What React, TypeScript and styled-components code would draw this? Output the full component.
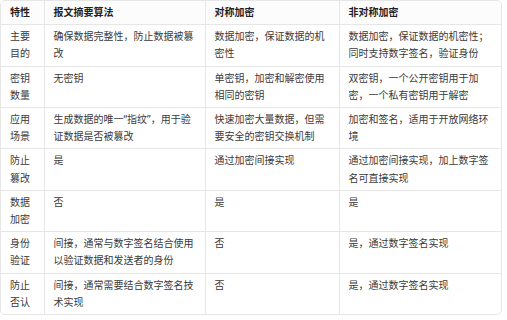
import styled, { createGlobalStyle } from 'styled-components';

const GlobalStyle = createGlobalStyle`
  html, body {
    margin: 0;
    padding: 0;
    background: #ffffff;
  }

  body {
    font-family: "Noto Sans", "Noto Sans CJK SC", sans-serif;
  }
`;

const TableFrame = styled.div`
  width: 502px;
  border: 1px solid #e6e6e6;
  border-radius: 5px;
  overflow: hidden;
  box-sizing: border-box;
`;

const Table = styled.table`
  width: 100%;
  border-collapse: collapse;
  table-layout: fixed;

  font-size: 10px;
  line-height: 17.2px;
`;

const HeadCell = styled.th<{ $width: number }>`
  box-sizing: border-box;
  width: ${({ $width }) => $width}px;
  padding: 3px 9px;
  border-left: 1px solid #e6e6e6;

  font-weight: 700;
  text-align: left;
  vertical-align: top;
  color: #1f1f1f;
  background-color: #fcfcfc;

  &:first-child {
    border-left: none;
  }
`;

const BodyRow = styled.tr`
  border-top: 1px solid #e6e6e6;
`;

const Cell = styled.td`
  box-sizing: border-box;
  padding: 3px 9px;
  border-left: 1px solid #e6e6e6;

  text-align: left;
  vertical-align: top;
  color: #3a3a3a;

  &:first-child {
    border-left: none;
  }
`;

const columns = [
  { title: '特性', width: 43 },
  { title: '报文摘要算法', width: 161 },
  { title: '对称加密', width: 134 },
  { title: '非对称加密', width: 162 },
];

const rows: string[][] = [
  ['主要目的', '确保数据完整性，防止数据被篡改', '数据加密，保证数据的机密性', '数据加密，保证数据的机密性；同时支持数字签名，验证身份'],
  ['密钥数量', '无密钥', '单密钥，加密和解密使用相同的密钥', '双密钥，一个公开密钥用于加密，一个私有密钥用于解密'],
  ['应用场景', '生成数据的唯一“指纹”，用于验证数据是否被篡改', '快速加密大量数据，但需要安全的密钥交换机制', '加密和签名，适用于开放网络环境'],
  ['防止篡改', '是', '通过加密间接实现', '通过加密间接实现，加上数字签名可直接实现'],
  ['数据加密', '否', '是', '是'],
  ['身份验证', '间接，通常与数字签名结合使用以验证数据和发送者的身份', '否', '是，通过数字签名实现'],
  ['防止否认', '间接，通常需要结合数字签名技术实现', '否', '是，通过数字签名实现'],
];

export default function App () {
  return (
    <>
      <GlobalStyle />
      <TableFrame>
        <Table>
          <thead>
            <tr>
              {columns.map((c) => (
                <HeadCell key={c.title} $width={c.width}>{c.title}</HeadCell>
              ))}
            </tr>
          </thead>
          <tbody>
            {rows.map((row) => (
              <BodyRow key={row[0]}>
                {row.map((text, i) => <Cell key={i}>{text}</Cell>)}
              </BodyRow>
            ))}
          </tbody>
        </Table>
      </TableFrame>
    </>
  );
};
